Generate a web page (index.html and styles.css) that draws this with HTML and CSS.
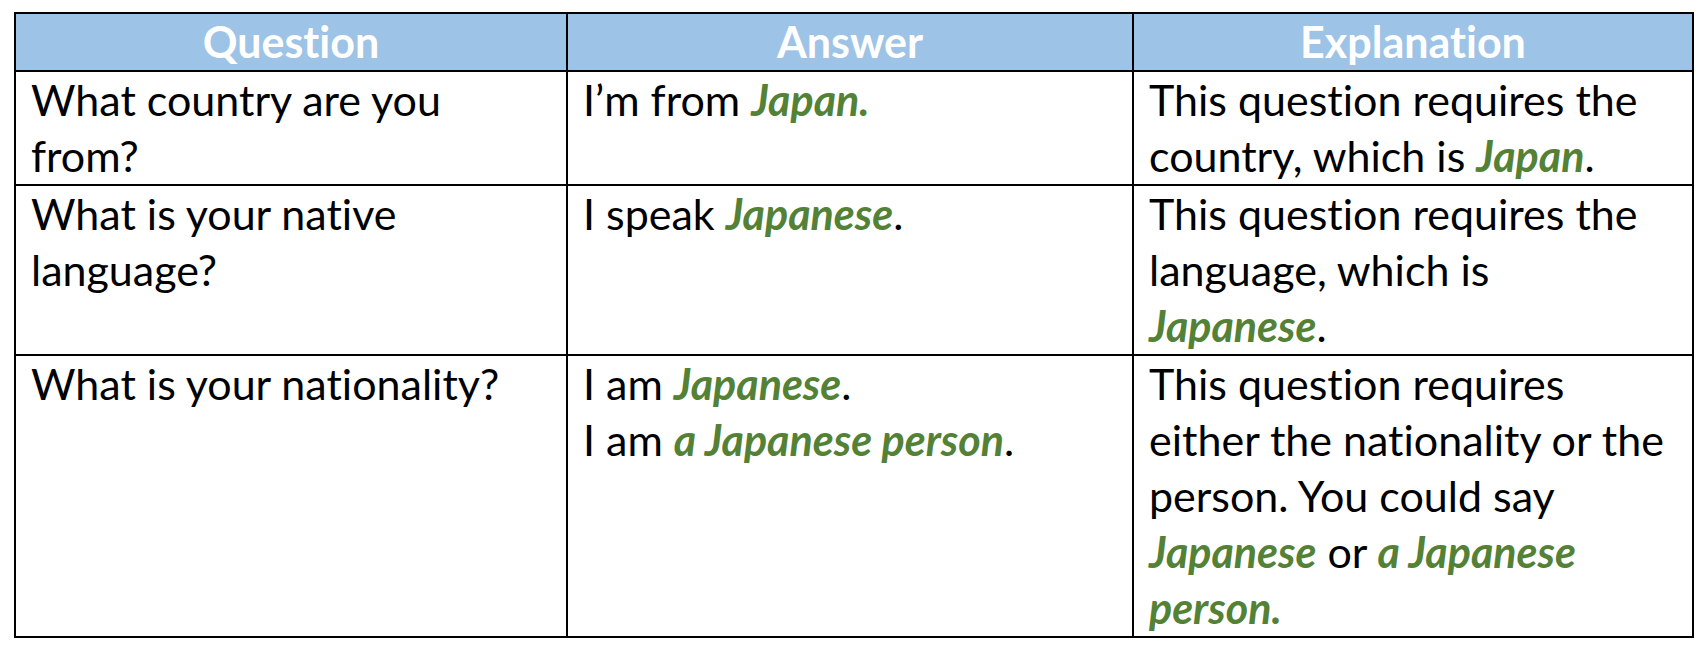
FILE: index.html
```html
<!DOCTYPE html>
<html lang="en">
<head>
<meta charset="utf-8">
<title>Question / Answer / Explanation</title>
<link rel="stylesheet" href="styles.css">
</head>
<body>
<div class="page">
<table class="qa">
  <colgroup>
    <col class="c1">
    <col class="c2">
    <col class="c3">
  </colgroup>
  <thead>
    <tr>
      <th>Question</th>
      <th>Answer</th>
      <th>Explanation</th>
    </tr>
  </thead>
  <tbody>
    <tr>
      <td>What country are you from?</td>
      <td>I’m from <em class="hl">Japan.</em></td>
      <td>This question requires the country, which is <em class="hl">Japan</em>.</td>
    </tr>
    <tr>
      <td>What is your native language?</td>
      <td>I speak <em class="hl">Japanese</em>.</td>
      <td>This question requires the language, which is <em class="hl">Japanese</em>.</td>
    </tr>
    <tr>
      <td>What is your nationality?</td>
      <td>I am <em class="hl">Japanese</em>.<br>I am <em class="hl">a Japanese person</em>.</td>
      <td>This question requires either the nationality or the person. You could say <em class="hl">Japanese</em> or <em class="hl">a Japanese person.</em></td>
    </tr>
  </tbody>
</table>
</div>
</body>
</html>
```

FILE: styles.css
```css
html, body {
  margin: 0;
  padding: 0;
  background: #ffffff;
}

.page {
  padding: 12px 0 0 14px;
}

.qa {
  table-layout: fixed;
  width: 1680px;
  border-collapse: separate;
  border-spacing: 0;
  border-top: 2px solid #000;
  border-left: 2px solid #000;
  font-family: Lato, "Open Sans", sans-serif;
  font-size: 43px;
  line-height: 56px;
  font-variant-ligatures: none;
  color: #000;
}

.c1 { width: 552px; }
.c2 { width: 566px; }
.c3 { width: 560px; }

.qa th,
.qa td {
  box-sizing: border-box;
  border-right: 2px solid #000;
  border-bottom: 2px solid #000;
  padding: 0 19px 0 15px;
  vertical-align: top;
  text-align: left;
  font-weight: 400;
}

.qa th {
  background: #9dc3e6;
  color: #ffffff;
  font-weight: 700;
  text-align: center;
  padding: 0;
}

.hl {
  color: #538135;
  font-weight: 700;
  font-style: italic;
}
```
